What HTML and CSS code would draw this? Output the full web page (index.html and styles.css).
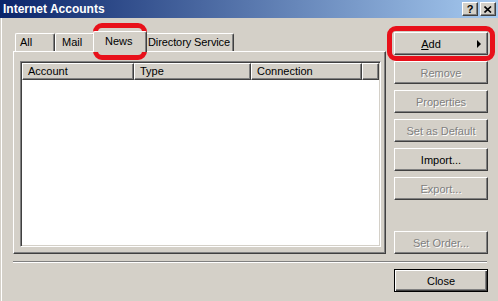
FILE: index.html
```html
<!DOCTYPE html>
<html lang="en">
<head>
  <meta charset="UTF-8">
  <title>Internet Accounts</title>
  <link rel="stylesheet" href="styles.css">
</head>
<body>
  <div class="window">
    <div class="titlebar">
      <span class="title">Internet Accounts</span>
      <div class="caption-btns">
        <span class="cbtn">?</span>
        <span class="cbtn">
          <svg width="8" height="7" viewBox="0 0 8 7"><path d="M0.5 0.5 L7 6.5 M7 0.5 L0.5 6.5" stroke="#000" stroke-width="1.6" fill="none"/></svg>
        </span>
      </div>
    </div>

    <div class="client">
      <div class="main">
        <div class="tabs-area">
          <div class="tabs">
            <div class="tab tab-all">All</div>
            <div class="tab tab-mail">Mail</div>
            <div class="tab tab-news tab-active">News</div>
            <div class="tab tab-dir">Directory Service</div>
          </div>
          <div class="panel">
            <div class="listview">
              <div class="lv-header">
                <div class="col col-account">Account</div>
                <div class="col col-type">Type</div>
                <div class="col col-conn">Connection</div>
                <div class="col col-fill"></div>
              </div>
            </div>
          </div>
        </div>

        <div class="side">
          <button class="btn btn-add"><span class="btn-label"><u>A</u>dd</span><span class="arrow"></span></button>
          <button class="btn btn-disabled">Remove</button>
          <button class="btn btn-disabled">Properties</button>
          <button class="btn btn-disabled">Set as Default</button>
          <button class="btn">Import...</button>
          <button class="btn btn-disabled">Export...</button>
          <button class="btn btn-disabled btn-bottom">Set Order...</button>
        </div>
      </div>

      <div class="separator"></div>

      <div class="footer">
        <button class="btn btn-default">Close</button>
      </div>
    </div>

    <div class="highlight hl-news"></div>
    <div class="highlight hl-add"></div>
  </div>
</body>
</html>
```

FILE: styles.css
```css
* {
  box-sizing: border-box;
}
body {
  margin: 0;
  font-family: "Liberation Sans", Arial, sans-serif;
  font-size: 11px;
  background: #d4d0c8;
}
.window {
  position: relative;
  width: 498px;
  height: 301px;
  background: #d4d0c8;
  overflow: hidden;
}
.titlebar {
  height: 18px;
  display: flex;
  align-items: center;
  justify-content: space-between;
  padding: 0 2px 0 3px;
  background: linear-gradient(to right, #0a246a, #a6caf0);
}
.title {
  color: #fff;
  font-weight: bold;
  font-size: 12px;
}
.caption-btns {
  display: flex;
  gap: 2px;
}
.cbtn {
  width: 16px;
  height: 14px;
  background: #d4d0c8;
  border: 1px solid;
  border-color: #fff #404040 #404040 #fff;
  box-shadow: inset -1px -1px #808080;
  display: flex;
  align-items: center;
  justify-content: center;
  font-weight: bold;
  font-size: 11px;
  line-height: 1;
}
.client {
  height: 283px;
  padding: 13px 10px 0 13px;
  box-shadow: inset 1px 0 #d4d0c8, inset 2px 0 #fff;
}
.main {
  display: flex;
  gap: 8px;
  height: 223px;
}
.tabs-area {
  width: 373px;
  display: flex;
  flex-direction: column;
}
.tabs {
  display: flex;
  align-items: flex-end;
  height: 20px;
  padding-left: 2px;
  position: relative;
  z-index: 1;
}
.tab {
  height: 18px;
  border: 1px solid;
  border-bottom: none;
  border-color: #fff #404040 #404040 #fff;
  box-shadow: inset -1px 0 #808080;
  border-radius: 2px 2px 0 0;
  line-height: 16px;
  white-space: nowrap;
}
.tab-all {
  width: 40px;
  padding-left: 4px;
}
.tab-mail {
  width: 40px;
  padding-left: 6px;
}
.tab-news {
  width: 50px;
  padding-left: 9px;
}
.tab-dir {
  width: 89px;
  padding-left: 2px;
  letter-spacing: -0.1px;
}
.tab-active {
  width: 54px;
  height: 21px;
  margin: 0 -2px -1px;
  padding-left: 11px;
  padding-top: 1px;
  background: #d4d0c8;
  position: relative;
}
.panel {
  flex: 1;
  border: 1px solid;
  border-color: #fff #404040 #404040 #fff;
  box-shadow: inset -1px -1px #808080;
  padding: 9px 4px 6px 6px;
}
.listview {
  height: 100%;
  background: #fff;
  border: 1px solid;
  border-color: #808080 #fff #fff #808080;
  box-shadow: inset 1px 1px #404040, inset -1px -1px #d4d0c8;
  padding: 1px;
}
.lv-header {
  display: flex;
  height: 17px;
}
.col {
  background: #d4d0c8;
  border: 1px solid;
  border-color: #fff #404040 #404040 #fff;
  box-shadow: inset -1px -1px #808080;
  padding-left: 5px;
  line-height: 14px;
}
.col-account {
  width: 112px;
}
.col-type {
  width: 117px;
}
.col-conn {
  width: 111px;
}
.col-fill {
  flex: 1;
}
.side {
  width: 94px;
  display: flex;
  flex-direction: column;
  gap: 6px;
  padding-top: 1px;
}
.btn {
  width: 94px;
  height: 23px;
  padding: 0;
  font-family: inherit;
  font-size: 11px;
  color: #000;
  background: #d4d0c8;
  border: 1px solid;
  border-color: #fff #404040 #404040 #fff;
  box-shadow: inset -1px -1px #808080;
  display: flex;
  align-items: center;
  justify-content: center;
}
.btn-add {
  padding-right: 6px;
}
.btn-label {
  flex: 1;
  text-align: center;
}
.arrow {
  width: 0;
  height: 0;
  margin-left: 10px;
  border-left: 4px solid #000;
  border-top: 4px solid transparent;
  border-bottom: 4px solid transparent;
}
.btn-disabled {
  color: #808080;
  text-shadow: 1px 1px #fff;
}
.btn-bottom {
  margin-top: auto;
}
.separator {
  width: 474px;
  height: 2px;
  margin-top: 7px;
  border-top: 1px solid #808080;
  border-bottom: 1px solid #fff;
}
.footer {
  display: flex;
  justify-content: flex-end;
  margin-top: 6px;
}
.btn-default {
  border: 1px solid #000;
  box-shadow: inset 1px 1px #fff, inset -1px -1px #404040, inset -2px -2px #808080;
}
.highlight {
  position: absolute;
  border: 5px solid #e8101a;
  border-radius: 9px;
}
.hl-news {
  left: 93px;
  top: 23px;
  width: 54px;
  height: 37px;
}
.hl-add {
  left: 387px;
  top: 26px;
  width: 108px;
  height: 35px;
}
```
